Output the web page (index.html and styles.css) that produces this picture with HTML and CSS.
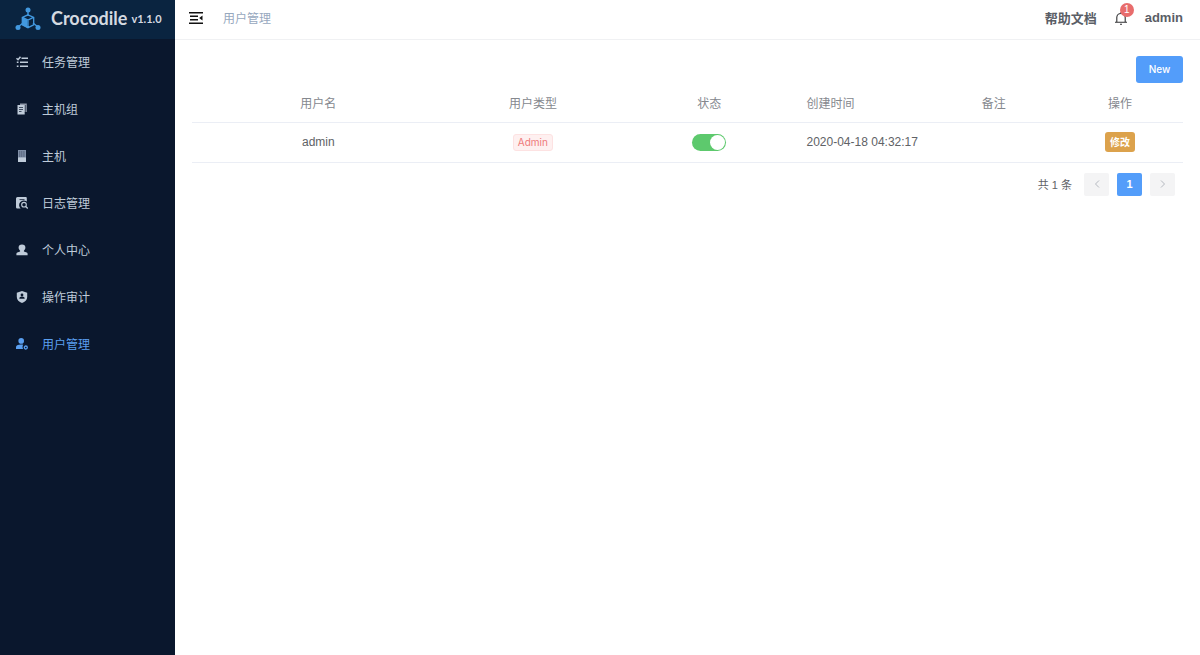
FILE: index.html
```html
<!DOCTYPE html>
<html lang="zh-CN">
<head>
  <meta charset="UTF-8" />
  <meta name="viewport" content="width=device-width, initial-scale=1.0"/>
  <title>Crocodile - 用户管理</title>
  <link rel="stylesheet" href="styles.css">
</head>
<body>
  <aside class="sidebar">
    <a class="logo" href="#">
      <svg width="26" height="24" viewBox="0 0 26 24">
        <g stroke="#4299e0" stroke-width="1.400">
          <path d="M13 3v6M8 16l-5 4M18 16l5 4"/>
        </g>
        <g fill="#4299e0">
          <circle cx="13" cy="3" r="2.500"/>
          <circle cx="3" cy="20.500" r="2.500"/>
          <circle cx="23" cy="20.500" r="2.500"/>
          <path d="M7.200 10.500l5.300 2.500v8l-5.300-3z"/>
        </g>
        <path d="M13 7.800l5.700 2.600v7.500L13 20.700l-5.700-2.800v-7.500zM7.500 10.400L13 13l5.500-2.600M13 13v7" fill="none" stroke="#4299e0" stroke-width="1.300"/>
      </svg>
      <span class="brand">Crocodile</span>
      <span class="version">v1.1.0</span>
    </a>

    <nav class="menu">
      <a href="#task">
        <svg class="icon" viewBox="0 0 12 12" fill="none" stroke="currentColor" stroke-width="1.500"><path d="M.5 2.200L2 3.700l2.500-3M5.500 2.200H12M4 6.200h8M4 10.200h8M.8 6.200h1.700M.8 10.200h1.700"/></svg>
        <span>任务管理</span>
      </a>
      <a href="#hostgroup">
        <svg class="icon" viewBox="0 0 12 12"><path d="M4 .5h6.800v8.500H4z" fill="#8f98a9"/><path d="M1.500 2h6.800l.4.500v9H1.500z" fill="currentColor"/><path d="M3 4.500h4M3 6.500h4M3 8.500h2.500" stroke="#0a172d" stroke-width=".7"/><path d="M9.300 2v7.500" stroke="#0a172d" stroke-width=".6"/></svg>
        <span>主机组</span>
      </a>
      <a href="#host">
        <svg class="icon" viewBox="0 0 12 12"><path d="M2 0h8v12H2z" fill="#8190a8"/><path d="M2 7.500h8V12H2z" fill="currentColor"/><path d="M3 2h6M3 4h6M3 6h6" stroke="#35435c" stroke-width=".8" stroke-dasharray="1.200 .6"/></svg>
        <span>主机</span>
      </a>
      <a href="#log">
        <svg class="icon" viewBox="0 0 12 12"><path d="M1.500 0h8.300a1 1 0 0 1 1 1v3.600A4 4 0 0 0 4.600 11.400H1.200A1.200 1.200 0 0 1 0 10.200V1.500A1.500 1.500 0 0 1 1.500 0z" fill="currentColor"/><path d="M3.500 2.600h5" stroke="#0a172d" stroke-width=".8"/><circle cx="8" cy="7.700" r="2.300" fill="none" stroke="currentColor" stroke-width="1.100"/><path d="M9.700 9.400l2 2.100" stroke="currentColor" stroke-width="1.300"/></svg>
        <span>日志管理</span>
      </a>
      <a href="#profile">
        <svg class="icon" viewBox="0 0 12 12" fill="currentColor"><path d="M6 .5c2.200 0 3.400 1.300 3.400 3 0 1.300-.7 2.500-1.500 3.200v.7l2.800 1.100c.7.300.9.800.9 1.500v1.200H.4V10c0-.7.200-1.200.9-1.500l2.800-1.100v-.7C3.300 6 2.600 4.800 2.600 3.500c0-1.700 1.200-3 3.400-3z"/></svg>
        <span>个人中心</span>
      </a>
      <a href="#audit">
        <svg class="icon" viewBox="0 0 12 12"><path d="M6 0l5.200 1.700V6c0 3-2.200 5-5.200 6C3 11 .8 9 .8 6V1.700z" fill="currentColor"/><circle cx="6" cy="4" r="1.400" fill="#0a172d"/><path d="M3.300 7.800c0-1.500 1-2.200 2.700-2.200s2.700.7 2.700 2.200z" fill="#0a172d"/></svg>
        <span>操作审计</span>
      </a>
      <a class="active" href="#user">
        <svg class="icon" viewBox="0 0 12 12" fill="currentColor"><circle cx="5.200" cy="2.900" r="2.800"/><path d="M0 11V9.500C0 7.500 1.700 6.600 5 6.600c.9 0 1.600 0 2.200.2-.8 1-.9 2.800-.1 4.200z"/><circle cx="9.800" cy="9.500" r="1.500" fill="none" stroke="currentColor" stroke-width="1.300"/></svg>
        <span>用户管理</span>
      </a>
    </nav>
  </aside>

  <div class="main">
    <header class="navbar">
      <button class="toggle" aria-label="收起菜单">
        <svg width="14" height="12" viewBox="0 0 14 12"><path d="M0 .8h14M1 4.300h8M1 7.700h8M0 11.200h14" stroke="#111" stroke-width="1.400"/><path d="M13.500 3.500v5L10.200 6z" fill="#111"/></svg>
      </button>
      <span class="breadcrumb">用户管理</span>
      <div class="right">
        <a href="#docs">帮助文档</a>
        <button class="bell" aria-label="通知">
          <svg width="14" height="14" viewBox="0 0 14 14" fill="none" stroke="#303133" stroke-width="1.100"><path d="M1 11.200h12M2.800 11V6.500C2.800 4 4.500 2.500 7 2.500s4.200 1.500 4.200 4V11M7 1v1.500M6 13.200h2"/></svg>
          <span class="badge">1</span>
        </button>
        <a href="#profile">admin</a>
      </div>
    </header>

    <main class="content">
      <div class="toolbar"><button class="btn-new">New</button></div>

      <table>
        <colgroup>
          <col class="c-name"><col class="c-mid"><col class="c-mid"><col class="c-time"><col class="c-small"><col>
        </colgroup>
        <thead>
          <tr><th>用户名</th><th>用户类型</th><th>状态</th><th class="left">创建时间</th><th>备注</th><th>操作</th></tr>
        </thead>
        <tbody>
          <tr>
            <td>admin</td>
            <td><span class="tag">Admin</span></td>
            <td><input class="switch" type="checkbox" aria-label="状态" checked></td>
            <td class="left">2020-04-18 04:32:17</td>
            <td></td>
            <td><button class="btn-edit">修改</button></td>
          </tr>
        </tbody>
      </table>

      <div class="pagination">
        <span class="total">共 1 条</span>
        <button aria-label="上一页" disabled><svg width="6" height="8" viewBox="0 0 6 8"><path d="M5 .5L1.500 4 5 7.500"/></svg></button>
        <button class="current">1</button>
        <button aria-label="下一页" disabled><svg width="6" height="8" viewBox="0 0 6 8"><path d="M1 .5L4.500 4 1 7.500"/></svg></button>
      </div>
    </main>
  </div>
</body>
</html>
```
FILE: styles.css
```css
* {
  box-sizing: border-box;
}
body {
  margin: 0;
  display: flex;
  min-height: 100vh;
  font-family: "Liberation Sans", "Noto Sans CJK SC", sans-serif;
  font-size: 12px;
  color: #606266;
  background: #fff;
}
a {
  color: inherit;
  text-decoration: none;
}
button {
  font: inherit;
  border: none;
  padding: 0;
  cursor: pointer;
}
svg {
  display: block;
}

/* sidebar */
.sidebar {
  width: 175px;
  flex-shrink: 0;
  background: #0a172d;
}
.logo {
  display: flex;
  align-items: center;
  height: 39px;
  padding: 0 0 2px 15px;
  background: #0a2440;
  color: #d5dae0;
  font-family: Lato, sans-serif;
  font-weight: bold;
}
.brand {
  margin-left: 10px;
  padding-bottom: 2px;
  font-size: 18px;
}
.version {
  margin-left: 4px;
  font-size: 11px;
}
.menu a {
  display: flex;
  align-items: center;
  gap: 14px;
  height: 47px;
  padding: 0 0 2px 16px;
  color: #bfcbd9;
}
.menu .active {
  color: #5a9ff0;
}
.icon {
  width: 12px;
  height: 12px;
}

/* top bar */
.main {
  flex: 1;
  min-width: 0;
}
.navbar {
  display: flex;
  align-items: center;
  height: 40px;
  padding: 0 17px 4px 14px;
  border-bottom: 1px solid #f0f1f3;
}
.toggle, .bell {
  background: none;
}
.breadcrumb {
  margin-left: 20px;
  color: #97a8be;
}
.right {
  display: flex;
  align-items: center;
  gap: 17px;
  margin-left: auto;
  font-size: 13px;
  font-weight: bold;
  color: #5a5e66;
}
.bell {
  position: relative;
}
.badge {
  position: absolute;
  top: -8px;
  left: 6px;
  width: 14px;
  height: 14px;
  border-radius: 7px;
  background: #e86c6c;
  color: #fff;
  font-size: 10px;
  font-weight: normal;
  line-height: 14px;
  text-align: center;
}

/* content */
.content {
  padding: 16px 17px;
}
.toolbar {
  display: flex;
  justify-content: flex-end;
}
.btn-new {
  width: 47px;
  height: 27px;
  padding-bottom: 1px;
  border-radius: 3px;
  background: #539dfa;
  color: #fff;
  font-family: Inter, sans-serif;
  font-size: 10px;
  font-weight: 500;
}
table {
  width: 100%;
  table-layout: fixed;
  border-collapse: collapse;
}
th, td {
  height: 40px;
  padding: 0 9px;
  border-bottom: 1px solid #ebeef5;
  text-align: center;
}
th {
  height: 39px;
  color: #85888e;
  font-weight: normal;
}
.left {
  text-align: left;
}
.c-name { width: 25.5%; }
.c-mid { width: 17.8%; }
.c-time { width: 13.4%; }
.c-small { width: 12.8%; }
.tag {
  display: inline-block;
  padding: 0 4px;
  border: 1px solid #fde2e2;
  border-radius: 3px;
  background: #fef0f0;
  color: #ee7a7a;
  font-family: Inter, sans-serif;
  font-size: 10px;
  line-height: 15px;
}
.switch {
  appearance: none;
  display: block;
  width: 34px;
  height: 17px;
  margin: 0 auto;
  padding: 1px;
  border-radius: 9px;
  background: #5dc96d;
}
.switch::before {
  content: "";
  display: block;
  width: 15px;
  height: 15px;
  border-radius: 50%;
  background: #fff;
}
.switch:checked::before {
  margin-left: auto;
}
.btn-edit {
  width: 30px;
  height: 20px;
  padding-bottom: 1px;
  border-radius: 3px;
  background: #dca24c;
  color: #fff;
  font-size: 10px;
  font-weight: bold;
}

/* pagination */
.pagination {
  display: flex;
  align-items: center;
  justify-content: flex-end;
  gap: 8px;
  padding: 10px 8px;
}
.total {
  margin-right: 4px;
  font-size: 11px;
}
.pagination button {
  display: flex;
  align-items: center;
  justify-content: center;
  width: 25px;
  height: 23px;
  border-radius: 2px;
  background: #f4f4f5;
}
.pagination .current {
  background: #539dfa;
  color: #fff;
  font-size: 11px;
  font-weight: bold;
}
.pagination svg {
  fill: none;
  stroke: #b4b8bf;
}
```
